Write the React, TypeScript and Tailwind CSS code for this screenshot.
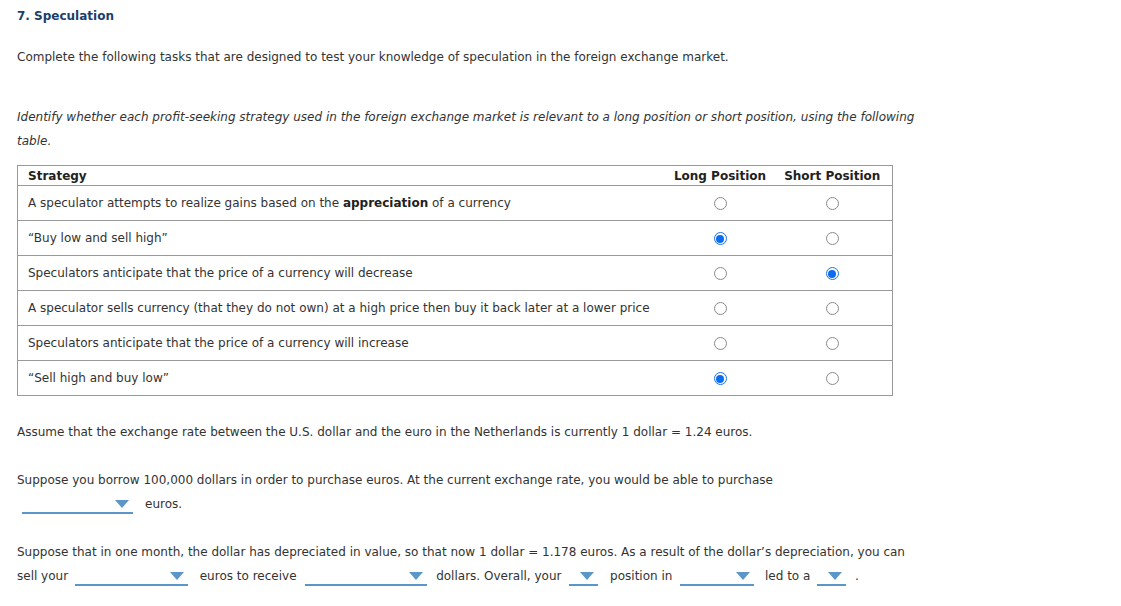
import React from 'react'

const rows: React.ReactNode[] = [
  <>
    A speculator attempts to realize gains based on the <b className="text-[#222]">appreciation</b> of a currency
  </>,
  '“Buy low and sell high”',
  'Speculators anticipate that the price of a currency will decrease',
  'A speculator sells currency (that they do not own) at a high price then buy it back later at a lower price',
  'Speculators anticipate that the price of a currency will increase',
  '“Sell high and buy low”',
]

// only rows 2, 3 and 6 have answers in the picture
const selected: ('long' | 'short' | null)[] = [null, 'long', 'short', null, null, 'long']

function Radio({ on }: { on: boolean }) {
  if (on) {
    return (
      <span className="inline-flex w-[13px] h-[13px] rounded-full border border-[#1a73e8] items-center justify-center align-middle">
        <span className="w-[8px] h-[8px] rounded-full bg-[#0a6cf0]"></span>
      </span>
    )
  }
  return <span className="inline-block w-[13px] h-[13px] rounded-full border border-[#8a8a8a] bg-white align-middle"></span>
}

function Drop({ w }: { w: string }) {
  return (
    <span className={`inline-flex ${w} h-[18px] border-b-2 border-[#5b96c8] justify-end items-center align-middle pr-[4px]`}>
      <svg width="14" height="8" viewBox="0 0 14 8">
        <path d="M0 0 L14 0 L7 8 Z" fill="#5b96c8" />
      </svg>
    </span>
  )
}

export default function App() {
  return (
    <div className="bg-white text-[#333] text-[12px] px-[17px] pt-[6px]" style={{ fontFamily: '"DejaVu Sans", Verdana, sans-serif' }}>
      <h2 className="text-[12px] font-bold text-[#1b3e6b] leading-[20px]">7. Speculation</h2>

      <p className="mt-[21px] leading-[20px]">
        Complete the following tasks that are designed to test your knowledge of speculation in the foreign exchange market.
      </p>

      <p className="mt-[38px] italic leading-[24px] max-w-[915px]">
        Identify whether each profit-seeking strategy used in the foreign exchange market is relevant to a long position or short position, using the following table.
      </p>

      <table className="mt-[12px] w-[876px] border-collapse border border-[#999]">
        <thead>
          <tr className="h-[20px]">
            <th className="text-left font-bold text-[#222] pl-[10px] border-b border-[#999]">Strategy</th>
            <th className="w-[113px] text-center font-bold text-[#222] border-b border-[#999] whitespace-nowrap">Long Position</th>
            <th className="w-[116px] text-center font-bold text-[#222] border-b border-[#999] whitespace-nowrap pr-[4px]">Short Position</th>
          </tr>
        </thead>
        <tbody>
          {rows.map((text, i) => (
            <tr key={i} className="h-[35px] border-b border-[#999]">
              <td className="pl-[10px] text-[#333]">{text}</td>
              <td className="text-center">
                <Radio on={selected[i] === 'long'} />
              </td>
              <td className="text-center pr-[4px]">
                <Radio on={selected[i] === 'short'} />
              </td>
            </tr>
          ))}
        </tbody>
      </table>

      <p className="mt-[26px] leading-[20px]">
        Assume that the exchange rate between the U.S. dollar and the euro in the Netherlands is currently 1 dollar = 1.24 euros.
      </p>

      <p className="mt-[26px] leading-[24px]">
        Suppose you borrow 100,000 dollars in order to purchase euros. At the current exchange rate, you would be able to purchase
        <br />
        <Drop w="w-[111px] ml-[5px] mr-[7px]" />
        <span className="ml-[5px]">euros.</span>
      </p>

      <p className="mt-[24px] leading-[24px]">
        Suppose that in one month, the dollar has depreciated in value, so that now 1 dollar = 1.178 euros. As a result of the dollar’s depreciation, you can
        <br />
        sell your <Drop w="w-[113px] ml-[3px] mr-[8px]" /> euros to receive <Drop w="w-[122px] ml-[5px] mr-[5px]" /> dollars. Overall, your{' '}
        <Drop w="w-[29px] ml-[4px] mr-[8px]" /> position in <Drop w="w-[74px] ml-[4px] mr-[7px]" /> led to a{' '}
        <Drop w="w-[29px] ml-[3px] mr-[5px]" /> .
      </p>
    </div>
  )
}
